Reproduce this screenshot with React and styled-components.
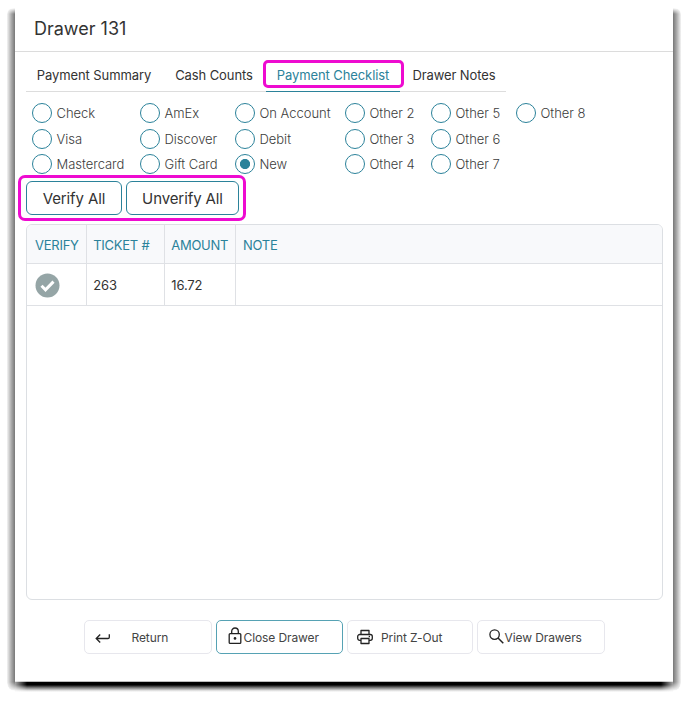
import React from 'react';
import styled, { createGlobalStyle } from 'styled-components';

const teal = '#2b829a';

const GlobalStyle = createGlobalStyle`
  * { box-sizing: border-box; }
  body { margin: 0; background: #fff; font-family: Inter, "Liberation Sans", sans-serif; color: #333; overflow: hidden; }
  button { font-family: inherit; cursor: pointer; }
`;

const Page = styled.div`
  height: 711px;
  padding: 0 15px;
`;

const Dialog = styled.main`
  position: relative;
  width: 658px;
  height: 681px;
  display: flex;
  flex-direction: column;
  background: #fff;
`;

const SideShadow = styled.span`
  position: absolute;
  top: 8px;
  bottom: -10px;
  width: 8px;
  ${({ $side }) => ($side === 'left' ? 'left: -8px;' : 'right: -8px;')}
  border-radius: ${({ $side }) => ($side === 'left' ? '7px 0 0 9px' : '0 7px 9px 0')};
  background: linear-gradient(to ${({ $side }) => $side}, #777, #aaa 45%, #f4f4f4);
  mask-image: linear-gradient(transparent, #000 6px, #000 calc(100% - 9px), transparent);
`;

const BottomShadow = styled.span`
  position: absolute;
  top: 100%;
  left: 0;
  right: 0;
  height: 11px;
  background: linear-gradient(#bbb 0, #bbb 1px, #000 1px, #000 35%, #777 60%, #ddd 85%, #fff);
  mask-image: linear-gradient(to right, rgba(0,0,0,.35), #000 12px, #000 calc(100% - 12px), rgba(0,0,0,.35));
`;

const Header = styled.header`
  height: 52px;
  flex: none;
  padding: 6px 19px 0;
  display: flex;
  align-items: center;
  border-bottom: 1px solid #dcdcdc;
`;

const Title = styled.h1`
  margin: 0;
  font-size: 18px;
  font-weight: 400;
  letter-spacing: 0;
`;

const Content = styled.div`
  padding: 8px 11px 0;
  display: flex;
  flex-direction: column;
`;

const Tabs = styled.nav`
  display: flex;
  gap: 2px;
  width: 480px;
  height: 32px;
  border-bottom: 1px solid #ddd;
`;

const Tab = styled.button`
  position: relative;
  width: ${({ $width }) => $width}px;
  height: 32px;
  padding: 0 0 1px;
  border: 0;
  border-bottom: 1px solid ${({ $active }) => ($active ? teal : 'transparent')};
  background: none;
  color: ${({ $active }) => ($active ? teal : '#333')};
  font-size: 13px;
  letter-spacing: -0.1px;
  white-space: nowrap;
`;

const Highlight = styled.span`
  position: absolute;
  inset: ${({ $inset }) => $inset};
  border: 3px solid #ee0bd0;
  border-radius: ${({ $radius }) => $radius}px;
  pointer-events: none;
`;

const RadioGrid = styled.div`
  display: grid;
  grid-template-columns: 108px 95px 110px 86px 85px 90px;
  grid-template-rows: repeat(3, 25.4px);
  grid-auto-flow: column;
  margin: 8.5px 0 0 6px;
  height: 77px;
`;

const RadioLabel = styled.label`
  display: flex;
  align-items: center;
  gap: 4.5px;
  color: #3c3c3c;
  font-size: 13px;
  font-weight: 300;
  letter-spacing: -0.03px;
  white-space: nowrap;
`;

const RadioCircle = styled.span`
  width: 20px;
  height: 20px;
  flex: none;
  border: 1px solid ${teal};
  border-radius: 50%;
  background: ${({ $checked }) => ($checked ? `radial-gradient(circle, ${teal} 4.7px, #fff 5.4px)` : '#fff')};
`;

const BulkActions = styled.div`
  position: relative;
  display: flex;
  gap: 4px;
  width: 213px;
  margin-top: 3.5px;
`;

const BulkButton = styled.button`
  width: ${({ $width }) => $width}px;
  height: 34px;
  padding: 0;
  background: #fff;
  color: #333;
  border: 1px solid ${teal};
  border-radius: 6px;
  font-size: 15px;
  letter-spacing: -0.1px;
`;

const TablePanel = styled.section`
  margin-top: 9px;
  width: 636.5px;
  height: 376px;
  border: 1px solid #dcdfe3;
  border-radius: 6px;
  overflow: hidden;
`;

const Table = styled.table`
  width: 100%;
  table-layout: fixed;
  border-collapse: separate;
  border-spacing: 0;
  font-size: 13px;
  letter-spacing: -0.1px;
`;

const HeadCell = styled.th`
  width: ${({ $width }) => $width};
  height: 39px;
  padding: 1px 6.2px 0;
  background: #f8f9fb;
  color: ${teal};
  font-weight: 400;
  text-align: left;
  white-space: nowrap;
  letter-spacing: -0.25px;
  border-bottom: 1px solid #dfe1e5;
  border-right: 1px solid #dfe1e5;
  &:first-child { padding-left: 8px; }
  &:last-child { border-right: 0; padding-left: 7px; }
`;

const Cell = styled.td`
  height: 42px;
  padding: 1px 6.2px 0;
  border-bottom: 1px solid #dfe1e5;
  border-right: 1px solid #dfe1e5;
  &:first-child { padding: 1px 0 0 8.4px; }
  &:last-child { border-right: 0; }
`;

const VerifiedIcon = styled.svg`
  display: block;
  width: 25px;
  height: 25px;
`;

const Footer = styled.footer`
  display: flex;
  gap: 4px;
  margin: 20px 0 0 58px;
`;

const FooterButton = styled.button`
  width: ${({ $width }) => $width}px;
  height: 34px;
  display: flex;
  align-items: center;
  padding: 0 0 0 ${({ $pad }) => $pad}px;
  gap: ${({ $gap }) => $gap}px;
  background: #fff;
  border: 1px solid ${({ $primary }) => ($primary ? '#56a2b4' : '#e7e7ed')};
  border-radius: 5px;
  color: #444;
  font-size: 12px;
  letter-spacing: -0.1px;
  white-space: nowrap;
  svg { flex: none; color: #222; }
`;

const ReturnIcon = () => (
  <svg width="16" height="12" viewBox="0 0 16 12" fill="none" stroke="currentColor" strokeWidth="1.3">
    <path d="M14.3 2.2V5.2Q14.3 6.5 13 6.5H1.5M5.2 2.5 1.2 6.5l4 4" />
  </svg>
);

const LockIcon = () => (
  <svg width="14" height="18" viewBox="0 0 14 18" fill="none" stroke="currentColor" strokeWidth="1.3">
    <rect x="1.2" y="6.6" width="11.6" height="9.8" rx="1" />
    <path d="M3.7 6.6V4.3a3.3 3.3 0 0 1 6.6 0v2.3" />
    <circle cx="7" cy="11.4" r="1.3" fill="currentColor" stroke="none" />
  </svg>
);

const PrinterIcon = () => (
  <svg width="16" height="16" viewBox="0 0 16 16" fill="none" stroke="currentColor" strokeWidth="1.3" strokeLinejoin="round">
    <path d="M4 5.5V1.5h8v4M4 11.3H2.7a2 2 0 0 1-2-2V7.5a2 2 0 0 1 2-2h10.6a2 2 0 0 1 2 2v1.8a2 2 0 0 1-2 2H12" />
    <path d="M4 9.5h8v5H4z" />
    <path d="M11.7 7.5h1.3" />
  </svg>
);

const SearchIcon = () => (
  <svg width="15" height="15" viewBox="0 0 15 15" fill="none" stroke="currentColor" strokeWidth="1.3">
    <circle cx="5.6" cy="5.6" r="4.7" />
    <path d="m9 9 5.3 5.2" strokeWidth="1.5" />
  </svg>
);

const IconShift = styled.span`
  display: flex;
  transform: translateY(${({ $y }) => $y}px);
`;

const payments = [
  'Check', 'Visa', 'Mastercard', 'AmEx', 'Discover', 'Gift Card', 'On Account', 'Debit', 'New',
  'Other 2', 'Other 3', 'Other 4', 'Other 5', 'Other 6', 'Other 7', 'Other 8',
];

const tabs = [
  ['Payment Summary', 136],
  ['Cash Counts', 100],
  ['Payment Checklist', 134],
  ['Drawer Notes', 104],
];

const actions = [
  { label: 'Return', width: 128, pad: 10, gap: 20.5, icon: <ReturnIcon />, y: 1 },
  { label: 'Close Drawer', width: 126.5, pad: 10.5, gap: 2, icon: <LockIcon />, y: -1 },
  { label: 'Print Z-Out', width: 126.5, pad: 9.5, gap: 8, icon: <PrinterIcon />, y: 0 },
  { label: 'View Drawers', width: 128, pad: 10.5, gap: 1, icon: <SearchIcon />, y: -1 },
];

export default function App() {
  return (
    <>
      <GlobalStyle />
      <Page>
        <Dialog>
          <SideShadow $side="left" />
          <SideShadow $side="right" />
          <BottomShadow />
          <Header><Title>Drawer 131</Title></Header>
          <Content>
            <Tabs>
              {tabs.map(([label, width]) => {
                const active = label === 'Payment Checklist';
                return (
                  <Tab key={label} $width={width} $active={active}>
                    {label}
                    {active && <Highlight $inset="0 -4px 3px -3px" $radius={5} />}
                  </Tab>
                );
              })}
            </Tabs>
            <RadioGrid>
              {payments.map((name) => (
                <RadioLabel key={name}>
                  <RadioCircle $checked={name === 'New'} />
                  {name}
                </RadioLabel>
              ))}
            </RadioGrid>
            <BulkActions>
              <BulkButton $width={96}>Verify All</BulkButton>
              <BulkButton $width={113}>Unverify All</BulkButton>
              <Highlight $inset="-6px -7px -6px -8px" $radius={7} />
            </BulkActions>
            <TablePanel>
              <Table>
                <thead>
                  <tr>
                    <HeadCell $width="60px">VERIFY</HeadCell>
                    <HeadCell $width="78px">TICKET #</HeadCell>
                    <HeadCell $width="71px">AMOUNT</HeadCell>
                    <HeadCell>NOTE</HeadCell>
                  </tr>
                </thead>
                <tbody>
                  <tr>
                    <Cell>
                      <VerifiedIcon viewBox="0 0 25 25">
                        <circle cx="12.5" cy="12.5" r="12" fill="#95a5a6" />
                        <path d="m6.5 12.8 4 4 8-8.2" fill="none" stroke="#fff" strokeWidth="3" />
                      </VerifiedIcon>
                    </Cell>
                    <Cell>263</Cell>
                    <Cell>16.72</Cell>
                    <Cell />
                  </tr>
                </tbody>
              </Table>
            </TablePanel>
            <Footer>
              {actions.map((a) => (
                <FooterButton
                  key={a.label}
                  $width={a.width}
                  $pad={a.pad}
                  $gap={a.gap}
                  $primary={a.label === 'Close Drawer'}
                >
                  <IconShift $y={a.y}>{a.icon}</IconShift>
                  {a.label}
                </FooterButton>
              ))}
            </Footer>
          </Content>
        </Dialog>
      </Page>
    </>
  );
}
